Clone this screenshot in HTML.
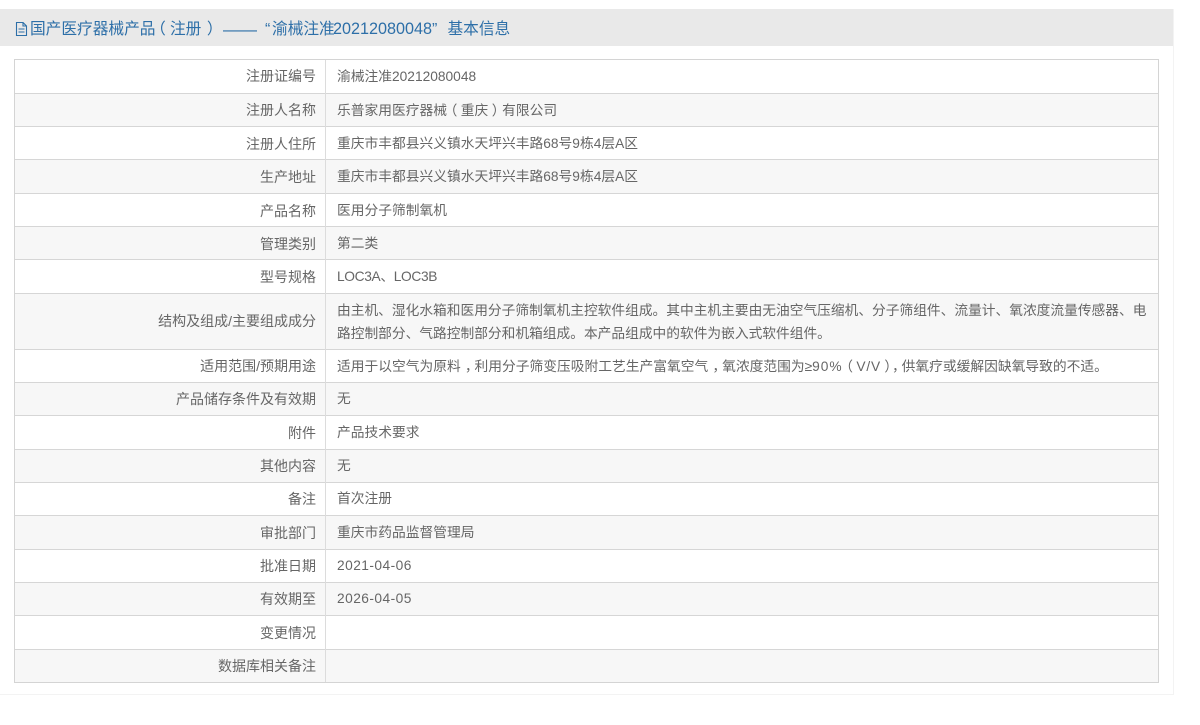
<!DOCTYPE html>
<html lang="zh-CN">
<head>
<meta charset="utf-8">
<title>基本信息</title>
<style>
html,body{margin:0;padding:0;background:#fff;width:1200px;height:725px;overflow:hidden}
body{position:relative;font-family:"Liberation Sans","Noto Sans CJK SC",sans-serif;font-size:13.75px;color:#666}
#wrap{position:absolute;left:0;top:0;width:1200px;height:725px;filter:blur(.3px)}
#panel{position:absolute;left:0;top:9px;width:1173px;height:685px;border-right:1px solid #f3f3f3;border-bottom:1px solid #f3f3f3;background:#fff}
#head{position:absolute;left:0;top:0;width:1173px;height:37px;background:#e9e9e9;color:#2d6fa8;font-size:15.7px;line-height:41px;white-space:nowrap}
#head svg{position:absolute;left:15px;top:13px}
#head span{position:absolute;top:0}
#tbl{position:absolute;left:14px;top:59px;width:1143px;height:622px;border:1px solid #d4d4d4}
.r{position:absolute;left:0;width:1143px;border-top:1px solid #d6d6d6;box-sizing:border-box}
.r.o{background:#f7f7f7}
.r b{font-weight:normal;font-size:14px;position:absolute;left:0;top:-1px;bottom:0;width:301px;display:flex;align-items:center;justify-content:flex-end}
.r b.p{transform:translateY(1px)}
.r i{font-style:normal;position:absolute;left:322px;top:0;bottom:0;width:815px;display:flex;align-items:center;line-height:23px}
.r i.u{transform:translateY(-1px)}
.r i>span{display:block}
.l{position:relative;left:-.25em}
.g{position:relative;left:.25em}
.c{position:relative;left:.3em}
#col{position:absolute;left:310px;top:0;width:1px;height:622px;background:#dcdcdc}
</style>
</head>
<body>
<div id="wrap">
<div id="panel">
<div id="head"><svg width="13" height="15" viewBox="0 0 13 15" fill="none" stroke="#2d6fa8" stroke-width="1.1"><path d="M1.5 .5H8L11.5 4V13.5H1.5Z"/><path d="M8 .5V4H11.5M3.5 7H9.5M3.5 10H9.5"/></svg><span style="left:30px">国产医疗器械产品</span><span style="left:154px"><span class="l" style="position:relative">（</span></span><span style="left:170px">注册</span><span style="left:203px"><span class="g" style="position:relative">）</span></span><span style="left:223px;font-size:17px">——</span><span style="left:265px;font-size:16px">“</span><span style="left:272px">渝械注准</span><span style="left:333px;font-size:16.2px">20212080048</span><span style="left:432px;font-size:16px">”</span><span style="left:447.5px">基本信息</span></div>
</div>
<div id="tbl">
<div class="r" style="top:0;height:33px;border-top:0"><b>注册证编号</b><i>渝械注准20212080048</i></div>
<div class="r o" style="top:33px;height:33px"><b>注册人名称</b><i><span>乐普家用医疗器械<span class="l">（</span>重庆<span class="g">）</span>有限公司</span></i></div>
<div class="r" style="top:66px;height:33px"><b class="p">注册人住所</b><i>重庆市丰都县兴义镇水天坪兴丰路68号9栋4层A区</i></div>
<div class="r o" style="top:99px;height:34px"><b class="p">生产地址</b><i>重庆市丰都县兴义镇水天坪兴丰路68号9栋4层A区</i></div>
<div class="r" style="top:133px;height:33px"><b class="p">产品名称</b><i>医用分子筛制氧机</i></div>
<div class="r o" style="top:166px;height:33px"><b class="p">管理类别</b><i>第二类</i></div>
<div class="r" style="top:199px;height:34px"><b class="p">型号规格</b><i style="letter-spacing:-.35px">LOC3A、LOC3B</i></div>
<div class="r o" style="top:233px;height:56px"><b>结构及组成/主要组成成分</b><i style="font-size:13.72px">由主机、湿化水箱和医用分子筛制氧机主控软件组成。其中主机主要由无油空气压缩机、分子筛组件、流量计、氧浓度流量传感器、电路控制部分、气路控制部分和机箱组成。本产品组成中的软件为嵌入式软件组件。</i></div>
<div class="r" style="top:289px;height:33px"><b>适用范围/预期用途</b><i><span>适用于以空气为原料<span class="c">，</span>利用分子筛变压吸附工艺生产富氧空气<span class="c">，</span>氧浓度范围为≥<span style="letter-spacing:1px">90%</span><span class="l">（</span><span style="letter-spacing:.8px">V/V</span><span class="g">）</span><span class="c">，</span>供氧疗或缓解因缺氧导致的不适。</span></i></div>
<div class="r o" style="top:322px;height:33px"><b>产品储存条件及有效期</b><i class="u">无</i></div>
<div class="r" style="top:355px;height:34px"><b class="p">附件</b><i>产品技术要求</i></div>
<div class="r o" style="top:389px;height:33px"><b>其他内容</b><i class="u">无</i></div>
<div class="r" style="top:422px;height:33px"><b>备注</b><i class="u">首次注册</i></div>
<div class="r o" style="top:455px;height:34px"><b class="p">审批部门</b><i>重庆市药品监督管理局</i></div>
<div class="r" style="top:489px;height:33px"><b>批准日期</b><i class="u" style="letter-spacing:.45px">2021-04-06</i></div>
<div class="r o" style="top:522px;height:33px"><b>有效期至</b><i class="u" style="letter-spacing:.45px">2026-04-05</i></div>
<div class="r" style="top:555px;height:34px"><b class="p">变更情况</b><i></i></div>
<div class="r o" style="top:589px;height:33px"><b>数据库相关备注</b><i></i></div>
<div id="col"></div>
</div>
</div>
</body>
</html>
